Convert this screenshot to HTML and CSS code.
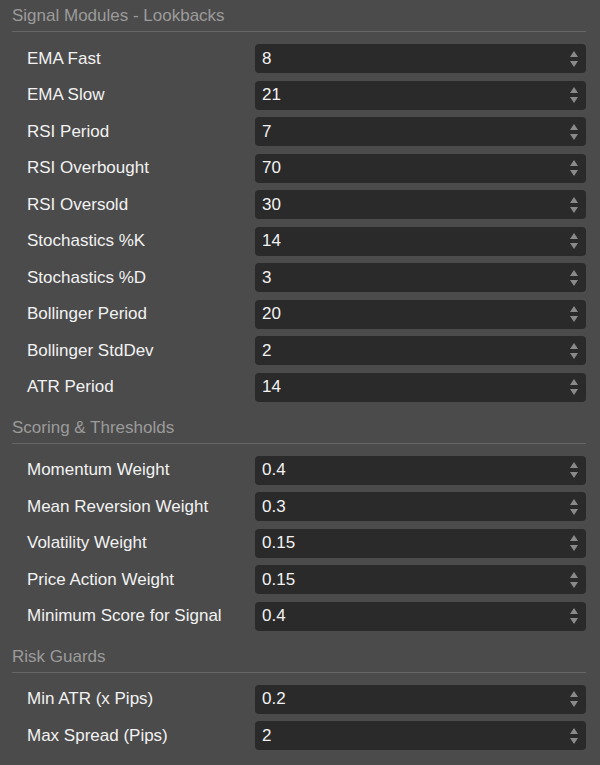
FILE: index.html
```html
<!DOCTYPE html>
<html>
<head>
<meta charset="utf-8">
<link rel="stylesheet" href="styles.css">
</head>
<body>
<div class="panel">
  <section class="section">
    <h2 class="section-title">Signal Modules - Lookbacks</h2>
    <div class="rows">
      <div class="row"><span class="label">EMA Fast</span><div class="field"><span class="value">8</span><span class="spin"><i class="up"></i><i class="down"></i></span></div></div>
      <div class="row"><span class="label">EMA Slow</span><div class="field"><span class="value">21</span><span class="spin"><i class="up"></i><i class="down"></i></span></div></div>
      <div class="row"><span class="label">RSI Period</span><div class="field"><span class="value">7</span><span class="spin"><i class="up"></i><i class="down"></i></span></div></div>
      <div class="row"><span class="label">RSI Overbought</span><div class="field"><span class="value">70</span><span class="spin"><i class="up"></i><i class="down"></i></span></div></div>
      <div class="row"><span class="label">RSI Oversold</span><div class="field"><span class="value">30</span><span class="spin"><i class="up"></i><i class="down"></i></span></div></div>
      <div class="row"><span class="label">Stochastics %K</span><div class="field"><span class="value">14</span><span class="spin"><i class="up"></i><i class="down"></i></span></div></div>
      <div class="row"><span class="label">Stochastics %D</span><div class="field"><span class="value">3</span><span class="spin"><i class="up"></i><i class="down"></i></span></div></div>
      <div class="row"><span class="label">Bollinger Period</span><div class="field"><span class="value">20</span><span class="spin"><i class="up"></i><i class="down"></i></span></div></div>
      <div class="row"><span class="label">Bollinger StdDev</span><div class="field"><span class="value">2</span><span class="spin"><i class="up"></i><i class="down"></i></span></div></div>
      <div class="row"><span class="label">ATR Period</span><div class="field"><span class="value">14</span><span class="spin"><i class="up"></i><i class="down"></i></span></div></div>
    </div>
  </section>
  <section class="section">
    <h2 class="section-title">Scoring &amp; Thresholds</h2>
    <div class="rows">
      <div class="row"><span class="label">Momentum Weight</span><div class="field"><span class="value">0.4</span><span class="spin"><i class="up"></i><i class="down"></i></span></div></div>
      <div class="row"><span class="label">Mean Reversion Weight</span><div class="field"><span class="value">0.3</span><span class="spin"><i class="up"></i><i class="down"></i></span></div></div>
      <div class="row"><span class="label">Volatility Weight</span><div class="field"><span class="value">0.15</span><span class="spin"><i class="up"></i><i class="down"></i></span></div></div>
      <div class="row"><span class="label">Price Action Weight</span><div class="field"><span class="value">0.15</span><span class="spin"><i class="up"></i><i class="down"></i></span></div></div>
      <div class="row"><span class="label">Minimum Score for Signal</span><div class="field"><span class="value">0.4</span><span class="spin"><i class="up"></i><i class="down"></i></span></div></div>
    </div>
  </section>
  <section class="section">
    <h2 class="section-title">Risk Guards</h2>
    <div class="rows">
      <div class="row"><span class="label">Min ATR (x Pips)</span><div class="field"><span class="value">0.2</span><span class="spin"><i class="up"></i><i class="down"></i></span></div></div>
      <div class="row"><span class="label">Max Spread (Pips)</span><div class="field"><span class="value">2</span><span class="spin"><i class="up"></i><i class="down"></i></span></div></div>
    </div>
  </section>
</div>
</body>
</html>
```

FILE: styles.css
```css
html, body {
  margin: 0;
  padding: 0;
  background: #4b4b4b;
}
body {
  font-family: "Liberation Sans", Arial, sans-serif;
  width: 600px;
  height: 765px;
  overflow: hidden;
}
.panel {
  padding: 0 14px 0 12px;
}
.section {
  margin-top: 10px;
}
.section:first-child {
  margin-top: 0;
}
.section-title {
  margin: 0;
  padding: 6px 0 5px;
  font-size: 17px;
  line-height: 20px;
  font-weight: normal;
  color: #9b9b9b;
  border-bottom: 1px solid #666666;
}
.rows {
  display: flex;
  flex-direction: column;
  gap: 7.5px;
  padding-top: 12px;
}
.row {
  display: grid;
  grid-template-columns: 228px 1fr;
  align-items: center;
  padding-left: 15px;
  height: 29px;
}
.label {
  font-size: 17px;
  color: #f2f2f2;
  white-space: nowrap;
}
.field {
  height: 29px;
  background: #2a2a2a;
  border-radius: 4px;
  display: flex;
  align-items: center;
  justify-content: space-between;
  padding: 0 8px 0 7px;
}
.value {
  font-size: 17px;
  color: #f2f2f2;
}
.spin {
  display: flex;
  flex-direction: column;
  align-items: center;
  gap: 4px;
}
.spin i {
  display: block;
  width: 0;
  height: 0;
  border-left: 4px solid transparent;
  border-right: 4px solid transparent;
}
.spin .up {
  border-bottom: 6px solid #8a8a8a;
}
.spin .down {
  border-top: 6px solid #8a8a8a;
}
```
